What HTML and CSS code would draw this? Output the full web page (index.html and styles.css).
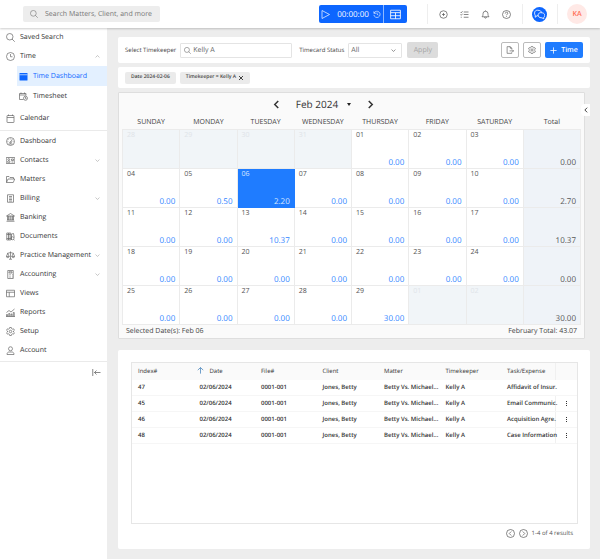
FILE: index.html
```html
<!DOCTYPE html>
<html lang="en">
<head>
    <meta charset="UTF-8">
    <meta name="viewport" content="width=device-width, initial-scale=1.0">
    <title>Time Dashboard</title>
    <link rel="stylesheet" href="styles.css">
</head>
<body>

<!-- Icon set -->
<svg class="sprite" aria-hidden="true">
    <symbol id="i-search" viewBox="0 0 18 18"><circle cx="7.5" cy="7.5" r="6.5"/><path d="M12 12l5.500 5.500"/></symbol>
    <symbol id="i-clock" viewBox="0 0 18 18"><circle cx="9" cy="9" r="8"/><path d="M9 4v5.500h4"/></symbol>
    <symbol id="i-sheet" viewBox="0 0 18 18"><path d="M9 15H1V3h13v4M1 6h13M4 1v3M11 1v3"/><circle cx="13" cy="12.500" r="4"/><path d="M13 10v3h2"/></symbol>
    <symbol id="i-calendar" viewBox="0 0 18 18"><rect x="2" y="3" width="14" height="14" rx="1"/><path d="M2 7h14M5 1v3M13 1v3"/></symbol>
    <symbol id="i-gauge" viewBox="0 0 18 18"><circle cx="9" cy="9" r="8"/><path d="M12.500 4.500l-3 6M3 9h1.500M5 5l1 1M9 3v1.500M13.500 9H15M5 14h8"/><circle cx="9" cy="11" r="1.500"/></symbol>
    <symbol id="i-card" viewBox="0 0 18 18"><path d="M.5 3h17v12H.5zM3 12.500c0-2 1-3 2.500-3s2.500 1 2.500 3zM11 6h4v3h-4zM11 12h4"/><circle cx="5.500" cy="7" r="1.800"/></symbol>
    <symbol id="i-folder" viewBox="0 0 18 18"><path d="M1 15V3h5l2 2h7v3M1 15l3-7h13.500l-3 7z"/></symbol>
    <symbol id="i-bill" viewBox="0 0 18 18"><path d="M3 1.500h12v15H3zM6 5h6M6 8h6M6 11h6M6 14h6"/></symbol>
    <symbol id="i-bank" viewBox="0 0 18 18"><path d="M1 6l8-5 8 5zM3 6v8M5 6v8M8 6v8M10 6v8M13 6v8M15 6v8M2 14h14M1 16.500h16"/></symbol>
    <symbol id="i-docs" viewBox="0 0 18 18"><path d="M1.500 2h4v14h-4zM5.500 2h4v14h-4zM1.500 5h8M11 16V4l4-1 1.500 8M1.500 13h8"/><circle cx="13" cy="12.500" r="3"/><path d="M15 14.500l2.500 2.500"/></symbol>
    <symbol id="i-scale" viewBox="0 0 18 18"><path d="M9 1v15M6 16.500h6M2 5l7-2 7 2M3.500 5L.5 11h6zM14.500 5l-3 6h6zM.5 11c.5 3 5.500 3 6 0M11.500 11c.5 3 5.500 3 6 0"/></symbol>
    <symbol id="i-calc" viewBox="0 0 18 18"><path d="M3.500 1h11v16h-11zM6 3.500h6v2.500H6zM6 9h1M9 9h1M12 9h1M6 12h1M9 12h1M12 12h1M6 14.500h1M9 14.500h1M12 14.500h1"/></symbol>
    <symbol id="i-views" viewBox="0 0 18 18"><path d="M1 2.500h16v13H1zM1 6.500h16M6.500 6.500v9"/></symbol>
    <symbol id="i-reports" viewBox="0 0 18 18"><path d="M1 17v-4h2v4M5.500 17v-6h2v6M10 17v-5h2v5M14.500 17V9h2v8M1 9l5-4 4 3 7-6M0 17h18"/></symbol>
    <symbol id="i-gear" viewBox="0 0 18 18"><path d="M7.300 1h3.400l.5 2.300 1.700 1 2.200-.7 1.700 2.900L15 8v2l1.800 1.500-1.700 2.900-2.200-.7-1.700 1-.5 2.300H7.300l-.5-2.300-1.700-1-2.200.7-1.700-2.900L3 10V8L1.200 6.500l1.700-2.900 2.200.7 1.700-1z"/><circle cx="9" cy="9" r="2.500"/></symbol>
    <symbol id="i-user" viewBox="0 0 18 18"><circle cx="9" cy="5.500" r="4"/><path d="M2 17c0-3 1.500-5 4-5h6c2.500 0 4 2 4 5z"/></symbol>
    <symbol id="i-down" viewBox="0 0 18 18"><path d="M2 5.500l7 7 7-7"/></symbol>
    <symbol id="i-up" viewBox="0 0 18 18"><path d="M2 12.500l7-7 7 7"/></symbol>
    <symbol id="i-left" viewBox="0 0 18 18"><path d="M12.500 2l-7 7 7 7"/></symbol>
    <symbol id="i-right" viewBox="0 0 18 18"><path d="M5.500 2l7 7-7 7"/></symbol>
    <symbol id="i-collapse" viewBox="0 0 18 18"><path d="M1.500 2v14M17 9H5M9 5L5 9l4 4"/></symbol>
    <symbol id="i-play" viewBox="0 0 18 18"><path d="M2 1L17 9 2 17z"/></symbol>
    <symbol id="i-history" viewBox="0 0 18 18"><path d="M2 3v4.500h4.500M2.500 7a7 7 0 1 1-.5 4M9 5.500v4l3 2"/></symbol>
    <symbol id="i-table" viewBox="0 0 18 18"><path d="M1 2h16v14H1zM1 6h16M1 11h16M9 6v10"/></symbol>
    <symbol id="i-add" viewBox="0 0 18 18"><circle cx="9" cy="9" r="7.500"/><path d="M9 6v6M6 9h6"/></symbol>
    <symbol id="i-tasks" viewBox="0 0 18 18"><path d="M1 4l1.500 1.500L5 2.500M1 9l1.500 1.500L5 7.500M1.500 14.500h2M7.500 4H17M7.500 9H17M7.500 14.500H17"/></symbol>
    <symbol id="i-bell" viewBox="0 0 18 18"><path d="M2 13.500c2-2 2-3.500 2-6a5 5 0 0 1 10 0c0 2.500 0 4 2 6zM7 14c0 3 4 3 4 0M9 1v1.500"/></symbol>
    <symbol id="i-help" viewBox="0 0 18 18"><circle cx="9" cy="9" r="8"/><path d="M6.500 7c0-3.500 5-3.500 5-.5 0 2-2.500 2-2.500 4M9 12.500v1.500"/></symbol>
    <symbol id="i-chat" viewBox="0 0 18 18"><path d="M7 11H5l-3 2.500V10C0 8 .5 2 5.500 2S12 4 12 5.500M11 6c8 0 7.500 6 5 7.500V16l-3-1.500c-8 .5-8-8.500-2-8.500z"/></symbol>
    <symbol id="i-export" viewBox="0 0 18 18"><path d="M13 8V5l-3.500-3.500H2.500v15H13V14M9.500 1.500V5H13M8 11h9M14.500 8.500L17 11l-2.500 2.500"/></symbol>
    <symbol id="i-plus" viewBox="0 0 18 18"><path d="M9 1v16M1 9h16"/></symbol>
    <symbol id="i-close" viewBox="0 0 18 18"><path d="M3 3l12 12M15 3L3 15"/></symbol>
    <symbol id="i-sort" viewBox="0 0 18 18"><path d="M9 17V1.500M2 8l7-6.500L16 8"/></symbol>
    <symbol id="i-prev" viewBox="0 0 18 18"><circle cx="9" cy="9" r="8"/><path d="M10.500 5l-4 4 4 4"/></symbol>
    <symbol id="i-next" viewBox="0 0 18 18"><circle cx="9" cy="9" r="8"/><path d="M7.500 5l4 4-4 4"/></symbol>
</svg>

<header class="topbar">
    <label class="global-search">
        <svg class="icon"><use href="#i-search"/></svg>
        <input type="text" placeholder="Search Matters, Client, and more" aria-label="Search">
    </label>
    <div class="topbar-right">
        <div class="timer">
            <button class="timer-main" aria-label="Start timer">
                <svg class="icon"><use href="#i-play"/></svg>
                <span>00:00:00</span>
                <svg class="icon small"><use href="#i-history"/></svg>
            </button>
            <button class="timer-list" aria-label="Timer list"><svg class="icon large"><use href="#i-table"/></svg></button>
        </div>
        <div class="actions">
            <button aria-label="Add"><svg class="icon"><use href="#i-add"/></svg></button>
            <button aria-label="Tasks"><svg class="icon"><use href="#i-tasks"/></svg></button>
            <button aria-label="Notifications"><svg class="icon"><use href="#i-bell"/></svg></button>
            <button aria-label="Help"><svg class="icon"><use href="#i-help"/></svg></button>
        </div>
        <div class="chat-wrap"><button class="chat" aria-label="Chat"><svg class="icon large"><use href="#i-chat"/></svg></button></div>
        <button class="avatar">KA</button>
    </div>
</header>

<div class="layout">
    <nav class="sidebar">
        <div class="nav-group">
            <a href="#"><svg class="icon"><use href="#i-search"/></svg>Saved Search</a>
            <a href="#"><svg class="icon"><use href="#i-clock"/></svg>Time<svg class="chevron"><use href="#i-up"/></svg></a>
            <div class="sub-nav">
                <a href="#" class="active"><svg class="icon" viewBox="0 0 18 18"><rect class="solid" x="1" y="2" width="16" height="15" rx="1"/><path class="line" d="M1 5.500h16"/></svg>Time Dashboard</a>
                <a href="#"><svg class="icon"><use href="#i-sheet"/></svg>Timesheet</a>
            </div>
            <a href="#"><svg class="icon"><use href="#i-calendar"/></svg>Calendar</a>
        </div>
        <div class="nav-group">
            <a href="#"><svg class="icon"><use href="#i-gauge"/></svg>Dashboard</a>
            <a href="#"><svg class="icon"><use href="#i-card"/></svg>Contacts<svg class="chevron"><use href="#i-down"/></svg></a>
            <a href="#"><svg class="icon"><use href="#i-folder"/></svg>Matters</a>
            <a href="#"><svg class="icon"><use href="#i-bill"/></svg>Billing<svg class="chevron"><use href="#i-down"/></svg></a>
            <a href="#"><svg class="icon"><use href="#i-bank"/></svg>Banking</a>
            <a href="#"><svg class="icon"><use href="#i-docs"/></svg>Documents</a>
            <a href="#"><svg class="icon"><use href="#i-scale"/></svg>Practice Management<svg class="chevron"><use href="#i-down"/></svg></a>
            <a href="#"><svg class="icon"><use href="#i-calc"/></svg>Accounting<svg class="chevron"><use href="#i-down"/></svg></a>
            <a href="#"><svg class="icon"><use href="#i-views"/></svg>Views</a>
            <a href="#"><svg class="icon"><use href="#i-reports"/></svg>Reports</a>
            <a href="#"><svg class="icon"><use href="#i-gear"/></svg>Setup</a>
            <a href="#"><svg class="icon"><use href="#i-user"/></svg>Account</a>
        </div>
        <button class="collapse" aria-label="Collapse menu"><svg class="icon"><use href="#i-collapse"/></svg></button>
    </nav>

    <main class="content">
        <form class="card filters">
            <label for="timekeeper">Select Timekeeper</label>
            <div class="field timekeeper">
                <svg class="icon"><use href="#i-search"/></svg>
                <input id="timekeeper" type="text" value="Kelly A">
            </div>
            <label for="status">Timecard Status</label>
            <div class="field status">
                <select id="status"><option>All</option></select>
                <svg class="chevron"><use href="#i-down"/></svg>
            </div>
            <button type="button" class="apply" disabled>Apply</button>
            <div class="filter-actions">
                <button type="button" class="square" aria-label="Export"><svg class="icon"><use href="#i-export"/></svg></button>
                <button type="button" class="square" aria-label="Settings"><svg class="icon"><use href="#i-gear"/></svg></button>
                <button type="button" class="primary"><svg class="icon"><use href="#i-plus"/></svg>Time</button>
            </div>
        </form>

        <div class="card chips">
            <span class="chip">Date 2024-02-06</span>
            <span class="chip">Timekeeper = Kelly A<button aria-label="Remove filter"><svg class="icon tiny"><use href="#i-close"/></svg></button></span>
        </div>

        <div class="calendar-area">
            <section class="calendar">
                <div class="calendar-header">
                    <button aria-label="Previous month"><svg class="icon"><use href="#i-left"/></svg></button>
                    <button class="month">Feb 2024<span class="caret"></span></button>
                    <button aria-label="Next month"><svg class="icon"><use href="#i-right"/></svg></button>
                </div>
                <table class="calendar-table">
                    <thead>
                        <tr><th>SUNDAY</th><th>MONDAY</th><th>TUESDAY</th><th>WEDNESDAY</th><th>THURSDAY</th><th>FRIDAY</th><th>SATURDAY</th><th>Total</th></tr>
                    </thead>
                    <tbody id="calendar-days"></tbody>
                </table>
                <div class="calendar-footer">
                    <span>Selected Date(s): Feb 06</span>
                    <span>February Total: 43.07</span>
                </div>
            </section>
            <button class="panel-toggle" aria-label="Open panel"><svg class="icon tiny"><use href="#i-left"/></svg></button>
        </div>

        <section class="card entries">
            <div class="entries-box">
                <table class="entries-table">
                    <thead>
                        <tr>
                            <th>Index#</th>
                            <th class="sorted"><svg class="icon"><use href="#i-sort"/></svg>Date</th>
                            <th>File#</th><th>Client</th><th>Matter</th><th>Timekeeper</th>
                            <th class="task">Task/Expense</th><th class="menu"></th>
                        </tr>
                    </thead>
                    <tbody id="entries"></tbody>
                </table>
            </div>
            <div class="pager">
                <button aria-label="Previous page"><svg class="icon"><use href="#i-prev"/></svg></button>
                <button aria-label="Next page"><svg class="icon"><use href="#i-next"/></svg></button>
                <span>1-4 of 4 results</span>
            </div>
        </section>
    </main>
</div>

<script>
    const firstDay = new Date(2024, 0, 28);
    const selectedDay = 6;
    const hours = { 5: "0.50", 6: "2.20", 13: "10.37", 29: "30.00" };
    const totals = ["0.00", "2.70", "10.37", "0.00", "30.00"];

    const entries = [
        ["47", "Affidavit of Insur."],
        ["45", "Email Communic."],
        ["46", "Acquisition Agre."],
        ["48", "Case Information"]
    ];

    function renderCalendar() {
        let html = "";
        totals.forEach((total, week) => {
            html += "<tr>";
            for (let i = 0; i < 7; i++) {
                const date = new Date(2024, 0, firstDay.getDate() + week * 7 + i);
                const day = date.getDate();
                const label = String(day).padStart(2, "0");
                if (date.getMonth() !== 1) {
                    html += `<td class="other"><div class="day"><span>${label}</span></div></td>`;
                } else {
                    const cls = day === selectedDay ? "selected" : "";
                    html += `<td class="${cls}"><div class="day"><span>${label}</span><span class="hours">${hours[day] || "0.00"}</span></div></td>`;
                }
            }
            html += `<td class="total"><div class="day"><span class="hours">${total}</span></div></td></tr>`;
        });
        document.getElementById("calendar-days").innerHTML = html;
    }

    // The first row has no row menu
    function renderEntries() {
        document.getElementById("entries").innerHTML = entries.map(([index, task], i) => `
            <tr>
                <td>${index}</td><td>02/06/2024</td><td>0001-001</td><td>Jones, Betty</td>
                <td>Betty Vs. Michael...</td><td>Kelly A</td><td class="task">${task}</td>
                ${i > 0 ? '<td class="menu"><button aria-label="Row menu"><i></i><i></i><i></i></button></td>' : "<td></td>"}
            </tr>`).join("");
    }

    renderCalendar();
    renderEntries();
</script>

</body>
</html>
```
FILE: styles.css
```css
* {
    box-sizing: border-box;
}

body {
    margin: 0;
    min-height: 100vh;
    display: flex;
    flex-direction: column;
    font-family: "Open Sans", "Noto Sans", sans-serif;
    font-size: 7px;
    line-height: 11px;
    text-rendering: geometricPrecision;
    color: #444;
    background: #ededed;
}

button, input, select {
    font: inherit;
    color: inherit;
    text-rendering: inherit;
    border: none;
    background: none;
    padding: 0;
    margin: 0;
    outline: none;
}

button {
    cursor: pointer;
    display: flex;
    align-items: center;
    justify-content: center;
}

a {
    color: inherit;
    text-decoration: none;
}

.sprite {
    position: absolute;
    width: 0;
    height: 0;
}

.icon, .chevron {
    width: 9px;
    height: 9px;
    flex: none;
    fill: none;
    stroke: currentColor;
    stroke-width: 1.4;
}

.chevron {
    width: 5px;
    height: 5px;
    stroke-width: 2;
}

.icon.small {
    width: 8px;
    height: 8px;
}

.icon.tiny {
    width: 6px;
    height: 6px;
    stroke-width: 3;
}

.icon.large {
    width: 11px;
    height: 11px;
}

/* Top bar */
.topbar {
    position: relative;
    height: 28px;
    padding: 0 13px 0 23px;
    display: flex;
    align-items: center;
    justify-content: space-between;
    background: #fff;
    box-shadow: 0 1px 2px rgba(0, 0, 0, 0.2);
}

.global-search {
    width: 137px;
    height: 16px;
    padding: 0 7px;
    display: flex;
    align-items: center;
    gap: 7px;
    border-radius: 2px;
    background: #ededed;
    color: #777;
}

.global-search .icon {
    width: 8px;
    height: 8px;
}

.global-search input {
    flex: 1;
    min-width: 0;
}

.global-search input::placeholder {
    color: #777;
}

.topbar-right {
    display: flex;
    align-items: center;
}

.timer {
    display: flex;
    height: 18px;
    margin-right: 20px;
    border-radius: 2px;
    overflow: hidden;
    background: #0d66ff;
    color: #fff;
}

.timer-main {
    width: 65px;
    gap: 4px;
    font-size: 8px;
    font-weight: 500;
    border-right: 1px solid #8db8ff;
}

.timer-main span {
    margin-left: 3px;
}

.timer-list {
    width: 23px;
}

.actions {
    display: flex;
    gap: 12px;
    padding: 0 11px;
    height: 20px;
    color: #555;
    border-left: 1px solid #eee;
    border-right: 1px solid #eee;
}

.chat-wrap {
    height: 20px;
    padding: 0 10px 0 9px;
    display: flex;
    align-items: center;
    border-right: 1px solid #eee;
}

.chat {
    width: 15px;
    height: 15px;
    border-radius: 50%;
    background: #0d66ff;
    color: #fff;
}

.avatar {
    width: 20px;
    height: 20px;
    margin-left: 9px;
    border-radius: 50%;
    background: #ffe9e6;
    color: #ff6e55;
    font-weight: 600;
}

/* Sidebar */
.layout {
    flex: 1;
    display: flex;
}

.sidebar {
    width: 107px;
    flex: none;
    background: #fff;
    color: #333;
    font-weight: 500;
}

.nav-group {
    padding-bottom: 2px;
    border-bottom: 1px solid #eaeaea;
}

.nav-group + .nav-group {
    padding: 1px 0;
}

.nav-group a {
    display: flex;
    align-items: center;
    height: 19px;
    padding: 0 7px 0 6px;
    white-space: nowrap;
}

.nav-group .icon {
    margin-right: 5px;
    color: #666;
}

.nav-group .chevron {
    margin-left: auto;
    color: #999;
}

.sub-nav {
    padding-left: 17px;
    margin-bottom: 3px;
}

.sub-nav a {
    height: 20px;
    padding-left: 2px;
}

.sub-nav a.active {
    background: #e3f0ff;
    color: #0d66ff;
}

.icon .solid {
    fill: #0d66ff;
    stroke: none;
}

.icon .line {
    stroke: #e3f0ff;
}

.collapse {
    margin: 6px 6px 0 auto;
    color: #555;
}

/* Main content */
.content {
    flex: 1;
    min-width: 0;
    display: flex;
    flex-direction: column;
    padding: 9px 10px 10px 11px;
}

.card {
    background: #fff;
    border-radius: 2px;
}

.filters {
    display: flex;
    align-items: center;
    height: 26px;
    padding: 0 7px;
    font-size: 6px;
    font-weight: 500;
    white-space: nowrap;
}

.field {
    display: flex;
    align-items: center;
    height: 15px;
    margin-left: 4px;
    padding: 0 5px 0 3px;
    border: 1px solid #e4e4e4;
    border-radius: 1px;
    color: #666;
    font-size: 7px;
    font-weight: 400;
}

.timekeeper {
    width: 112px;
    margin-right: 7px;
    gap: 2px;
}

.timekeeper .icon {
    width: 7px;
    height: 7px;
}

.field input, .field select {
    flex: 1;
    min-width: 0;
    appearance: none;
}

.status {
    width: 54px;
    margin-right: 5px;
    padding-left: 2px;
}

.status .chevron {
    color: #444;
}

.apply {
    width: 31px;
    height: 16px;
    border-radius: 2px;
    background: #dcdcdc;
    color: #a3a3a3;
    font-size: 7px;
}

.filter-actions {
    display: flex;
    gap: 4px;
    margin-left: auto;
}

.square {
    width: 18px;
    height: 16px;
    border: 1px solid #bbb;
    border-radius: 2px;
    color: #555;
}

.square .icon {
    width: 8px;
    height: 8px;
}

.primary {
    width: 38px;
    height: 16px;
    gap: 4px;
    border-radius: 2px;
    background: #1f7cff;
    color: #fff;
    font-size: 7px;
    font-weight: 600;
}

.primary .icon {
    width: 7px;
    height: 7px;
    stroke-width: 2;
}

.chips {
    display: flex;
    align-items: center;
    gap: 4px;
    height: 21px;
    margin-top: 4px;
    padding: 0 7px;
}

.chip {
    display: flex;
    align-items: center;
    gap: 2px;
    height: 12px;
    padding: 0 6px;
    border-radius: 2px;
    background: #ebebeb;
    font-size: 5px;
    font-weight: 600;
}

/* Calendar */
.calendar-area {
    position: relative;
    margin-top: 4px;
    padding-right: 5px;
}

.calendar {
    padding: 0 3px;
    border: 1px solid #dedede;
    border-radius: 1px;
    background: #fafafa;
}

.calendar-header {
    display: flex;
    align-items: center;
    justify-content: center;
    gap: 15px;
    height: 22px;
    padding-right: 56px;
    color: #333;
}

.calendar-header .icon {
    stroke-width: 3;
}

.month {
    gap: 9px;
    font-size: 10px;
    font-weight: 500;
}

.caret {
    border: 2px solid transparent;
    border-top: 3px solid #222;
    border-bottom: none;
}

.calendar-table {
    width: 100%;
    table-layout: fixed;
    border-collapse: collapse;
}

.calendar-table th {
    height: 14px;
    padding: 2px 0 0;
    font-weight: 500;
}

.calendar-table td {
    height: 39px;
    padding: 0;
    border: 1px solid #ebebeb;
    background: #fff;
    color: #555;
}

.day {
    display: flex;
    flex-direction: column;
    height: 38px;
    padding: 0 4px;
}

.hours {
    margin-top: auto;
    text-align: right;
    font-size: 8px;
    line-height: 10px;
    color: #3386ff;
}

.calendar-table .other {
    background: #f1f5f8;
    color: #e0e4e8;
}

.calendar-table .selected,
.calendar-table .selected .hours {
    background: #1f7cff;
    border-color: #1f7cff;
    color: #d9e8ff;
}

.calendar-table .total {
    background: #eff3f8;
}

.total .hours {
    color: #555;
}

.calendar-footer {
    display: flex;
    justify-content: space-between;
    padding: 0 4px;
    height: 13px;
    align-items: center;
}

.panel-toggle {
    position: absolute;
    top: 12px;
    right: 0;
    width: 9px;
    height: 12px;
    border-radius: 4px 0 0 4px;
    background: #fff;
}

/* Entries */
.entries {
    flex: 1;
    display: flex;
    flex-direction: column;
    margin-top: 11px;
    padding: 12px 12px 10px 13px;
}

.entries-box {
    flex: 1;
    min-height: 90px;
    border: 1px solid #e6e6e6;
}

.entries-table {
    width: 100%;
    table-layout: fixed;
    border-collapse: collapse;
    font-size: 6px;
    font-weight: 600;
    color: #333;
}

.entries-table th {
    height: 17px;
    padding: 0 0 0 6px;
    background: #fafafa;
    font-weight: 500;
    text-align: left;
}

.entries-table td {
    height: 16px;
    padding: 0 0 0 6px;
    border-bottom: 1px solid #f6f6f6;
    white-space: nowrap;
}

.entries-table .task {
    width: 54px;
}

.entries-table .menu {
    width: 22px;
    padding: 0;
    border-left: 1px solid #f0f0f0;
}

.entries-table .sorted {
    padding-left: 3px;
}

.sorted .icon {
    width: 7px;
    height: 7px;
    margin-right: 6px;
    color: #4a86bd;
    stroke-width: 2;
    vertical-align: middle;
}

.menu button {
    flex-direction: column;
    gap: 1px;
    width: 100%;
}

.menu i {
    width: 1px;
    height: 1px;
    background: #333;
}

.pager {
    display: flex;
    align-items: center;
    justify-content: flex-end;
    gap: 4px;
    padding: 4px 5px 0 0;
    font-size: 6px;
    color: #555;
}
```
